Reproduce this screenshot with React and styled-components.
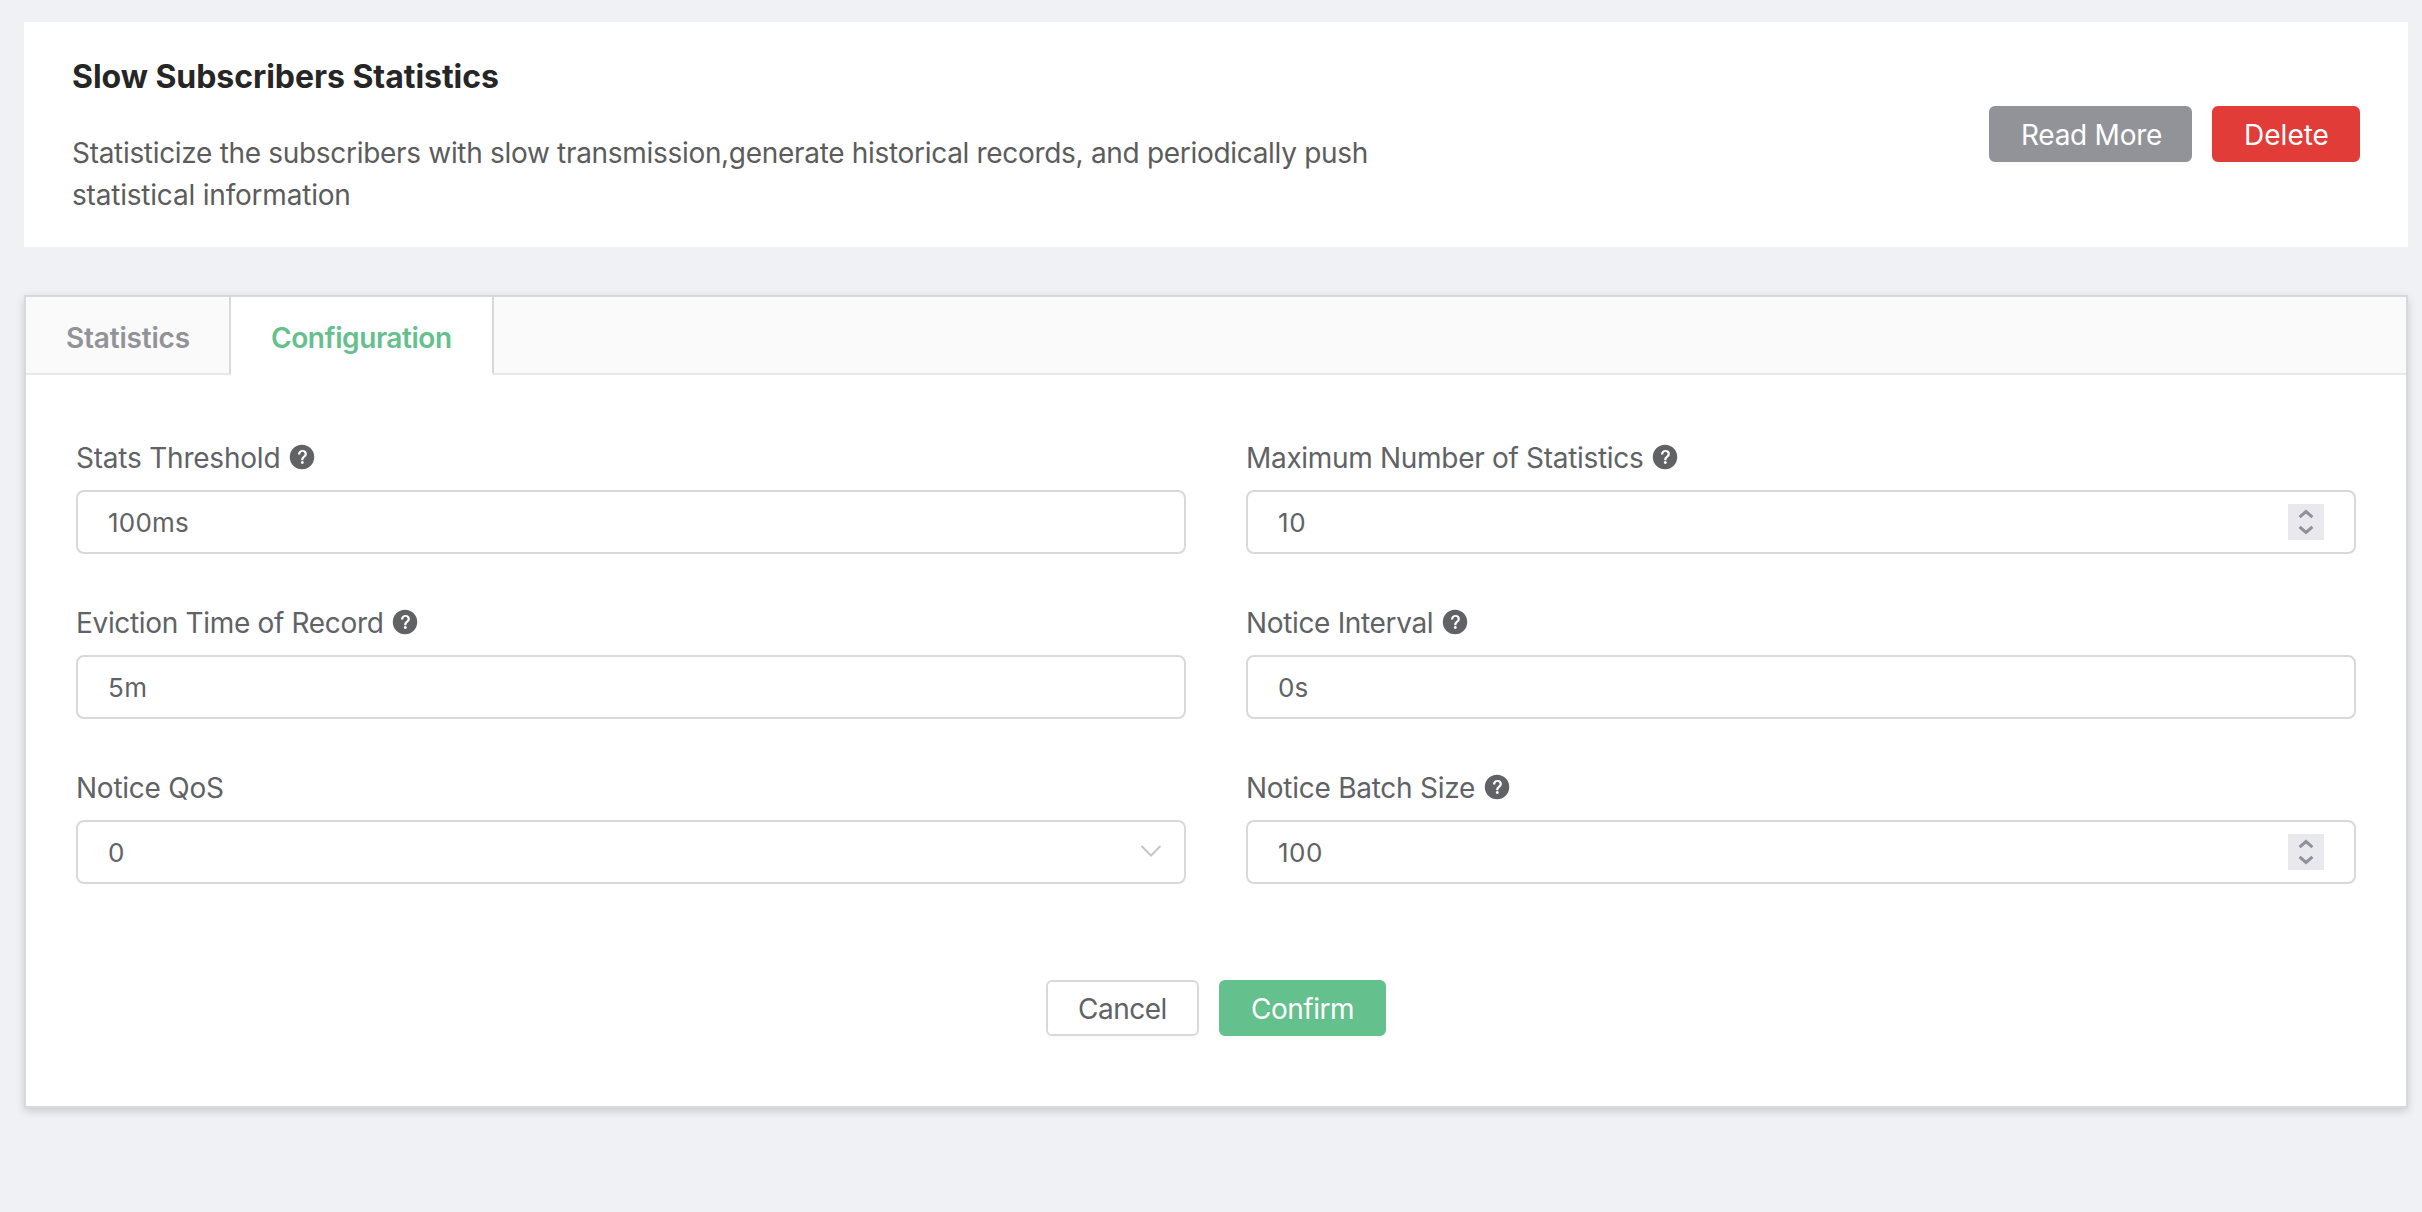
import React from 'react';
import styled, { createGlobalStyle } from 'styled-components';

const GlobalStyle = createGlobalStyle`
  *, *::before, *::after { box-sizing: border-box; }
  body {
    margin: 0;
    background: #f0f1f5;
    color: #606266;
    font-family: Inter, "Liberation Sans", sans-serif;
    font-size: 28px;
  }
`;

const Page = styled.main`
  display: flex;
  flex-direction: column;
  gap: 48px;
  min-height: 100vh;
  padding: 22px 14px 0 24px;
`;

const Tracked = styled.span`
  letter-spacing: ${(p) => p.$ls || 0}px;
  white-space: nowrap;
`;

const HeaderCard = styled.header`
  display: flex;
  justify-content: space-between;
  align-items: center;
  padding: 33px 48px 31px;
  background: #fff;
`;

const Title = styled.h1`
  margin: 0 0 33px;
  color: #262626;
  font-size: 32px;
  font-weight: 700;
  line-height: 44px;
  letter-spacing: -0.04px;
`;

const Description = styled.p`
  display: flex;
  flex-direction: column;
  margin: 0;
  color: #5c5c5c;
  line-height: 42px;
`;

const ButtonRow = styled.div`
  display: flex;
  justify-content: center;
  gap: 20px;
  margin: ${(p) => p.$margin || 0};
`;

const variants = {
  info: { bg: '#929398', fg: '#fff', border: '#929398' },
  danger: { bg: '#e23c39', fg: '#fff', border: '#e23c39' },
  primary: { bg: '#64c08d', fg: '#fff', border: '#64c08d' },
  plain: { bg: '#fff', fg: '#606266', border: '#d9d9d9' },
};

const Button = styled.button`
  display: flex;
  align-items: center;
  justify-content: center;
  width: ${(p) => p.$width}px;
  height: 56px;
  padding: 2px 0 0 ${(p) => p.$nudge || 0}px;
  border: 2px solid ${(p) => variants[p.$variant].border};
  border-radius: 6px;
  background: ${(p) => variants[p.$variant].bg};
  color: ${(p) => variants[p.$variant].fg};
  box-shadow: 0 4px 0 rgba(0, 0, 0, 0.016);
  font: inherit;
  line-height: 36px;
`;

const Panel = styled.section`
  border: 2px solid #d9d9d9;
  background: #fff;
  box-shadow: 0 4px 8px rgba(0, 0, 0, 0.12), 0 0 12px rgba(0, 0, 0, 0.04);
`;

const TabBar = styled.nav`
  display: flex;
  height: 78px;
  background: #fafafa;
`;

const Tab = styled.div`
  width: ${(p) => p.$width}px;
  padding-left: 40px;
  border-right: 2px solid #d9d9d9;
  border-bottom: 2px solid ${(p) => (p.$active ? '#fff' : '#e8e8e8')};
  background: ${(p) => (p.$active ? '#fff' : 'transparent')};
  color: ${(p) => (p.$active ? '#64c08d' : '#929398')};
  font-weight: 600;
  line-height: 82px;
`;

const TabFill = styled.div`
  flex: 1;
  border-bottom: 2px solid #e8e8e8;
`;

const Form = styled.div`
  display: grid;
  grid-template-columns: 1fr 1fr;
  gap: 47px 60px;
  padding: 61px 50px 0;
`;

const Label = styled.div`
  display: flex;
  align-items: center;
  gap: 8px;
  height: 44px;
  margin-bottom: 10px;
  line-height: 44px;
`;

const HelpSvg = styled.svg`
  width: 28px;
  height: 28px;
  margin-bottom: 2px;
  fill: #606266;
`;

const Control = styled.div`
  display: flex;
  align-items: center;
  justify-content: space-between;
  height: 64px;
  padding: 0 ${(p) => (p.$kind === 'select' ? 19 : 30)}px 0 30px;
  border: 2px solid #d9d9d9;
  border-radius: 8px;
  background: #fff;
`;

const Value = styled(Tracked)`
  padding-top: 2px;
  font-size: 26px;
  line-height: 58px;
`;

const Spinner = styled.svg`
  width: 36px;
  height: 36px;
  background: #e9e9ed;
  fill: none;
  stroke: #8f8f9d;
  stroke-width: 3;
`;

const Chevron = styled.svg`
  width: 28px;
  height: 28px;
  margin-bottom: 2px;
  fill: none;
  stroke: #c0c4cc;
  stroke-width: 2;
`;

const HelpIcon = () => (
  <HelpSvg viewBox="0 0 1024 1024">
    <path d="M512 64a448 448 0 1 1 0 896 448 448 0 0 1 0-896zm23.744 191.488c-52.096 0-92.928 14.784-123.2 44.352-30.976 29.568-45.76 70.4-45.76 122.496h80.256c0-29.568 5.632-52.8 17.6-68.992 13.376-19.712 35.2-28.864 66.176-28.864 23.936 0 42.944 6.336 56.32 19.712 12.672 13.376 19.712 31.68 19.712 54.912 0 17.6-6.336 34.496-19.008 49.984l-8.448 9.856c-45.76 40.832-73.216 70.4-82.368 89.408-9.856 19.008-14.08 42.24-14.08 68.992v9.856h80.96v-9.856c0-16.896 3.52-31.68 10.56-45.76 6.336-12.672 15.488-24.64 28.16-35.2 33.792-29.568 54.208-48.576 60.544-55.616 16.896-22.528 26.048-51.392 26.048-86.592 0-42.944-14.08-76.736-42.24-101.376-28.16-25.344-65.472-37.312-111.232-37.312zm-12.672 406.208a54.272 54.272 0 0 0-38.72 14.784 49.408 49.408 0 0 0-15.488 38.016c0 15.488 4.928 28.16 15.488 38.016A54.848 54.848 0 0 0 523.072 768c15.488 0 28.16-4.928 38.72-14.784a51.52 51.52 0 0 0 16.192-38.72 51.968 51.968 0 0 0-15.488-38.016 55.936 55.936 0 0 0-39.424-14.784z" />
  </HelpSvg>
);

const fields = [
  { label: 'Stats Threshold', ls: -0.22, value: '100ms', valueLs: 0.2, help: true },
  { label: 'Maximum Number of Statistics', ls: -0.31, value: '10', valueLs: 0.7, help: true, kind: 'number' },
  { label: 'Eviction Time of Record', ls: -0.33, value: '5m', valueLs: 0.5, help: true },
  { label: 'Notice Interval', ls: -0.34, value: '0s', valueLs: 0, help: true },
  { label: 'Notice QoS', ls: -0.25, value: '0', valueLs: 0, kind: 'select' },
  { label: 'Notice Batch Size', ls: -0.261, value: '100', valueLs: 0.5, help: true, kind: 'number' },
];

const Field = ({ label, ls, value, valueLs, help, kind }) => (
  <div>
    <Label>
      <Tracked $ls={ls}>{label}</Tracked>
      {help && <HelpIcon />}
    </Label>
    <Control $kind={kind}>
      <Value $ls={valueLs}>{value}</Value>
      {kind === 'number' && (
        <Spinner viewBox="0 0 36 36">
          <path d="M11.6 13.2 18 7.6 24.4 13.2M11.6 22.8 18 28.4 24.4 22.8" />
        </Spinner>
      )}
      {kind === 'select' && (
        <Chevron viewBox="0 0 28 28">
          <path d="M4.6 9 14 18.6 23.4 9" />
        </Chevron>
      )}
    </Control>
  </div>
);

export default function App() {
  return (
    <>
      <GlobalStyle />
      <Page>
        <HeaderCard>
          <div>
            <Title>Slow Subscribers Statistics</Title>
            <Description>
              <Tracked $ls={-0.31}>
                Statisticize the subscribers with slow transmission,generate historical records, and periodically push
              </Tracked>
              <Tracked $ls={-0.2}>statistical information</Tracked>
            </Description>
          </div>
          <ButtonRow $margin="0 0 3px">
            <Button $variant="info" $width={203} $nudge={2}>
              <Tracked $ls={-0.26}>Read More</Tracked>
            </Button>
            <Button $variant="danger" $width={148} $nudge={1}>
              <Tracked>Delete</Tracked>
            </Button>
          </ButtonRow>
        </HeaderCard>
        <Panel>
          <TabBar>
            <Tab $width={205}>
              <Tracked $ls={-0.2}>Statistics</Tracked>
            </Tab>
            <Tab $width={263} $active>
              <Tracked $ls={-0.42}>Configuration</Tracked>
            </Tab>
            <TabFill />
          </TabBar>
          <Form>
            {fields.map((f) => (
              <Field key={f.label} {...f} />
            ))}
          </Form>
          <ButtonRow $margin="96px 0 70px">
            <Button $variant="plain" $width={153}>
              <Tracked $ls={-0.5}>Cancel</Tracked>
            </Button>
            <Button $variant="primary" $width={167}>
              <Tracked $ls={-0.48}>Confirm</Tracked>
            </Button>
          </ButtonRow>
        </Panel>
      </Page>
    </>
  );
}
